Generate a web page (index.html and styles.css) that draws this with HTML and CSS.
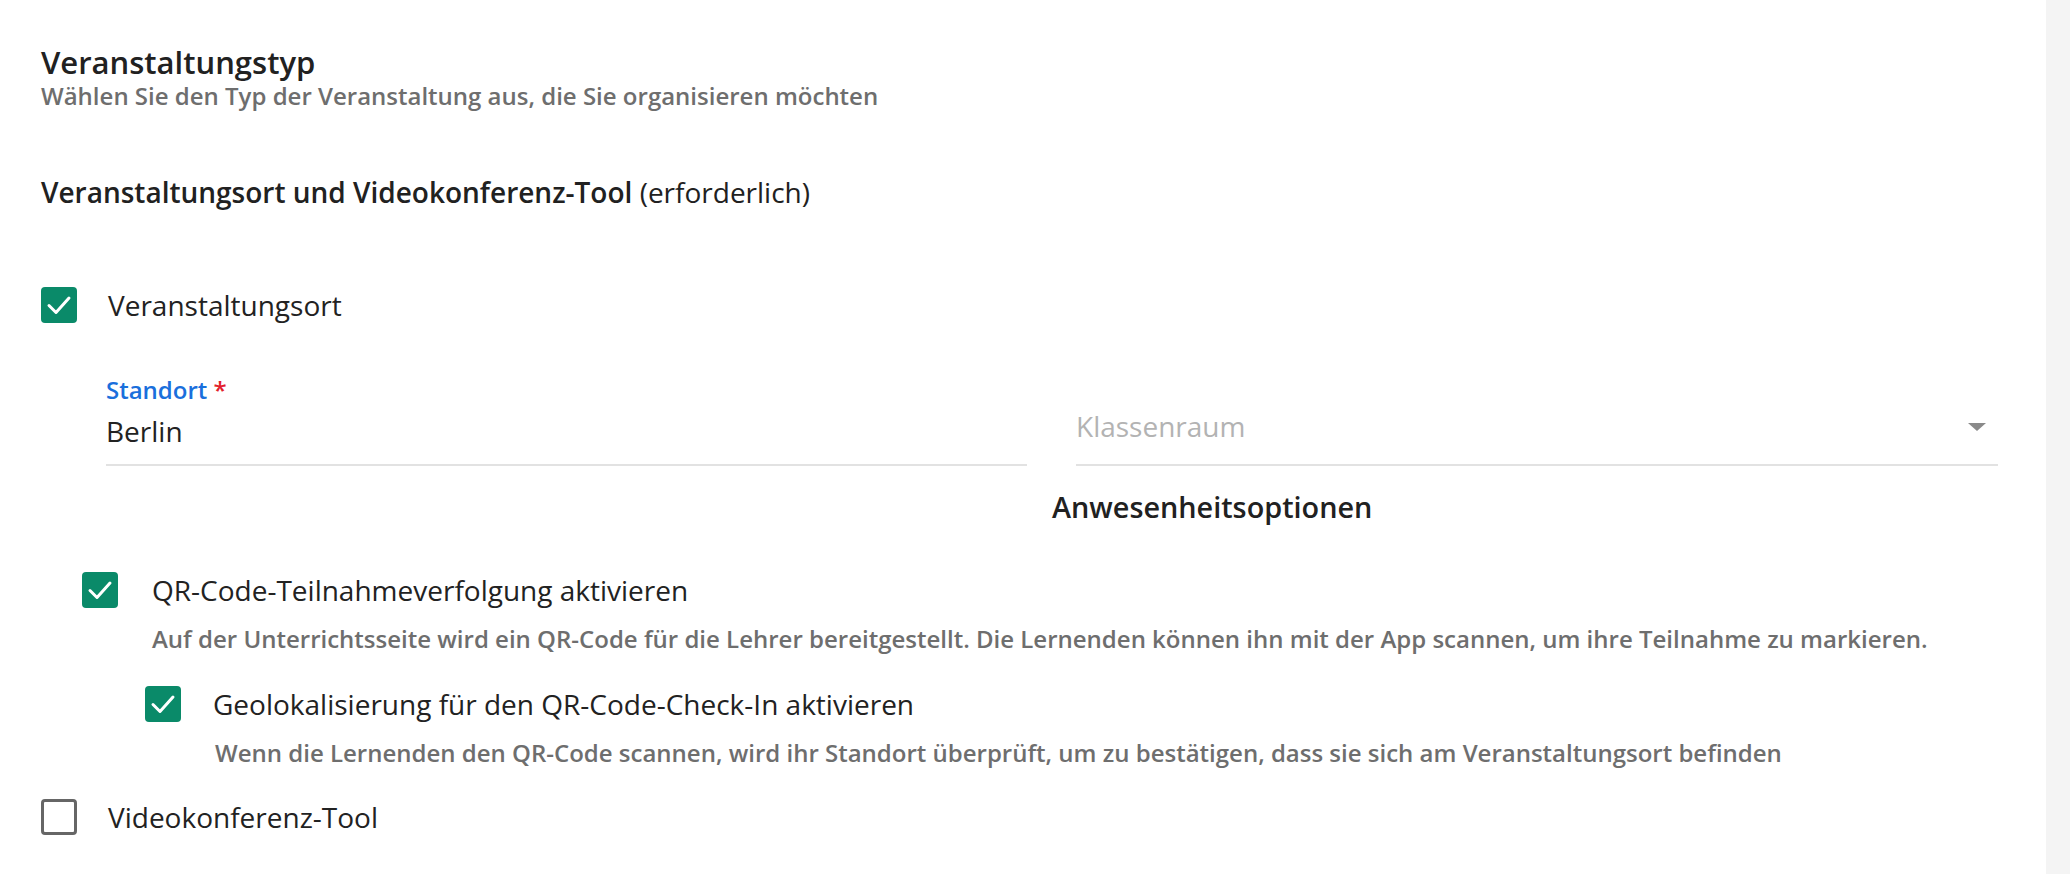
FILE: index.html
```html
<!DOCTYPE html>
<html lang="de">
<head>
<meta charset="utf-8">
<title>Veranstaltungstyp</title>
<link rel="stylesheet" href="styles.css">
</head>
<body>
<div class="page">
  <main class="content">
    <h1 class="title">Veranstaltungstyp</h1>
    <p class="subtitle">Wählen Sie den Typ der Veranstaltung aus, die Sie organisieren möchten</p>

    <h2 class="section">Veranstaltungsort und Videokonferenz-Tool <span class="muted">(erforderlich)</span></h2>

    <div class="check-row row-place">
      <span class="box checked"><svg viewBox="0 0 36 36" width="36" height="36"><polyline points="8,18.5 15,25.5 28,11" fill="none" stroke="#fff" stroke-width="3" stroke-linecap="round" stroke-linejoin="round"/></svg></span>
      <span class="check-label">Veranstaltungsort</span>
    </div>

    <div class="fields">
      <div class="field">
        <div class="field-label">Standort <span class="req">*</span></div>
        <div class="field-input">Berlin</div>
      </div>
      <div class="field field-select">
        <div class="field-input placeholder">Klassenraum<span class="arrow"></span></div>
      </div>
    </div>

    <div class="attendance">
      <h3 class="att-title">Anwesenheitsoptionen</h3>
    </div>

    <div class="option opt-qr">
      <div class="check-row">
        <span class="box checked"><svg viewBox="0 0 36 36" width="36" height="36"><polyline points="8,18.5 15,25.5 28,11" fill="none" stroke="#fff" stroke-width="3" stroke-linecap="round" stroke-linejoin="round"/></svg></span>
        <span class="check-label">QR-Code-Teilnahmeverfolgung aktivieren</span>
      </div>
      <p class="desc">Auf der Unterrichtsseite wird ein QR-Code für die Lehrer bereitgestellt. Die Lernenden können ihn mit der App scannen, um ihre Teilnahme zu markieren.</p>
    </div>

    <div class="option opt-geo">
      <div class="check-row">
        <span class="box checked"><svg viewBox="0 0 36 36" width="36" height="36"><polyline points="8,18.5 15,25.5 28,11" fill="none" stroke="#fff" stroke-width="3" stroke-linecap="round" stroke-linejoin="round"/></svg></span>
        <span class="check-label">Geolokalisierung für den QR-Code-Check-In aktivieren</span>
      </div>
      <p class="desc">Wenn die Lernenden den QR-Code scannen, wird ihr Standort überprüft, um zu bestätigen, dass sie sich am Veranstaltungsort befinden</p>
    </div>

    <div class="check-row row-video">
      <span class="box"></span>
      <span class="check-label">Videokonferenz-Tool</span>
    </div>
  </main>
  <aside class="strip"></aside>
</div>
</body>
</html>
```

FILE: styles.css
```css
* { box-sizing: border-box; }

html, body {
  margin: 0;
  padding: 0;
  background: #ffffff;
}

body {
  font-family: "Open Sans", "Noto Sans", sans-serif;
  color: #222222;
  width: 2070px;
  height: 874px;
  overflow: hidden;
}

.page {
  display: flex;
  height: 874px;
}

.content {
  flex: 1;
  padding: 44px 0 0 41px;
  background: #ffffff;
}

.strip {
  width: 24px;
  background: #f4f4f4;
}

.title {
  margin: 0;
  font-size: 31px;
  line-height: 36px;
  font-weight: 600;
  color: #212121;
}

.subtitle {
  margin: 0;
  font-size: 24px;
  line-height: 32px;
  font-weight: 600;
  color: #6e6e6e;
}

.section {
  margin: 63px 0 0;
  font-size: 28px;
  line-height: 34px;
  font-weight: 600;
  color: #212121;
}

.section .muted {
  font-weight: 400;
}

.check-row {
  display: flex;
  align-items: center;
  gap: 31px;
  height: 36px;
}

.row-place { margin-top: 78px; }

.box {
  width: 36px;
  height: 36px;
  border-radius: 4px;
  border: 3px solid #666666;
  flex: none;
  display: flex;
  align-items: center;
  justify-content: center;
  overflow: hidden;
}

.box.checked {
  background: #0a8a69;
  border: none;
}

.box svg { display: block; }

.check-label {
  font-size: 28px;
  line-height: 36px;
  font-weight: 400;
  color: #222222;
}

.fields {
  display: grid;
  grid-template-columns: 921px 922px;
  column-gap: 49px;
  margin: 52px 0 0 65px;
  width: 1892px;
  align-items: end;
}

.field-label {
  font-size: 24px;
  line-height: 30px;
  font-weight: 600;
  color: #1a6fdc;
}

.req { color: #e3202b; }

.field-input {
  font-size: 28px;
  line-height: 38px;
  padding: 0 0 14px;
  border-bottom: 2px solid #e2e2e2;
  position: relative;
}

.field .field-label + .field-input {
  margin-top: 7px;
}

.field-select .field-input {
  padding-bottom: 19px;
  color: #b3b3b3;
}

.arrow {
  position: absolute;
  right: 12px;
  top: 16px;
  width: 0;
  height: 0;
  border-left: 9px solid transparent;
  border-right: 9px solid transparent;
  border-top: 8px solid #8a8a8a;
}

.attendance {
  margin: 24px 0 0 65px;
  width: 1892px;
  padding-left: 946px;
}

.att-title {
  margin: 0;
  font-size: 28.8px;
  line-height: 34px;
  font-weight: 600;
  color: #212121;
  white-space: nowrap;
}

.desc {
  margin: 15px 0 0;
  font-size: 24px;
  line-height: 32px;
  font-weight: 600;
  color: #6e6e6e;
  white-space: nowrap;
}

.opt-qr {
  margin: 48px 0 0 41px;
}

.opt-qr .check-row { gap: 34px; }
.opt-qr .desc { padding-left: 70px; }

.opt-geo {
  margin: 31px 0 0 104px;
}

.opt-geo .check-row { gap: 32px; }
.opt-geo .desc { padding-left: 70px; }

.row-video { margin-top: 30px; }
```
